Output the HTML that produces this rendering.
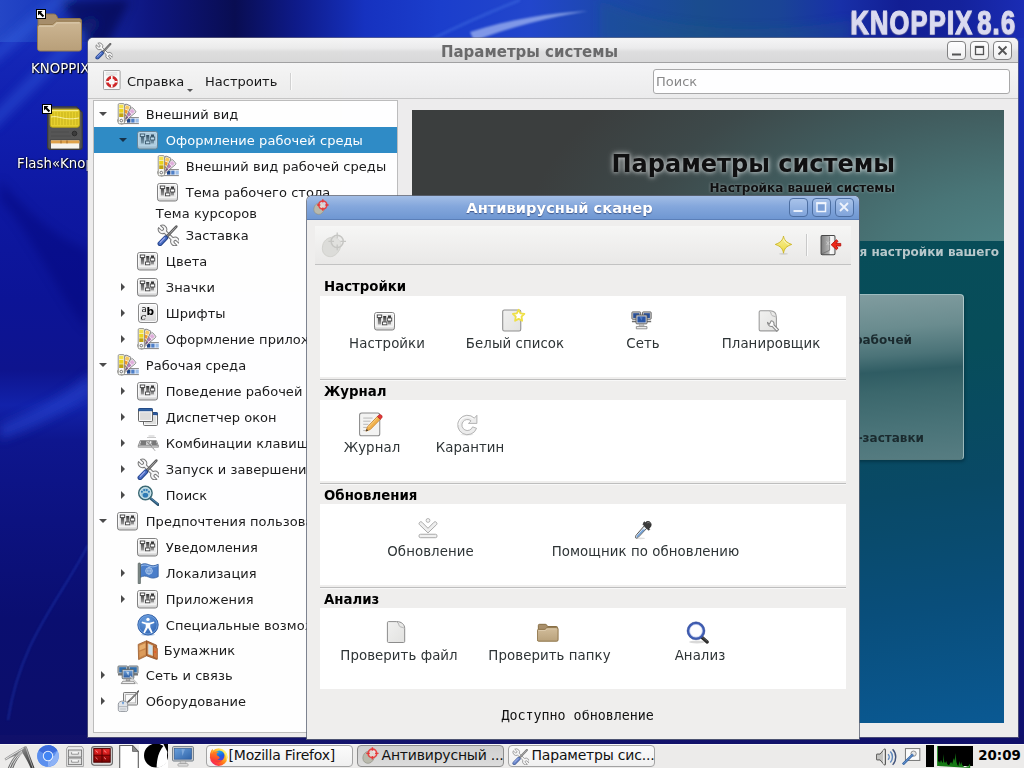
<!DOCTYPE html>
<html lang="ru"><head><meta charset="utf-8"><title>KNOPPIX 8.6</title>
<style>
*{box-sizing:border-box;margin:0;padding:0}
html,body{width:1024px;height:768px;overflow:hidden}
body{position:relative;font-family:"DejaVu Sans","Liberation Sans",sans-serif;font-size:13px;color:#1a1a1a;background:#0b1078}
.a{position:absolute}
svg{position:absolute;overflow:visible}
#desk{position:absolute;left:0;top:0;width:1024px;height:768px;overflow:hidden;
 background:linear-gradient(180deg,#1a32c2 0,#1426b6 60px,#101eae 125px,#0e18a2 200px,#0c1496 300px,#0e148e 370px,#1222aa 405px,#0e168e 440px,#0c1280 520px,#0a0e70 620px,#0c0e68 768px)}
#dtop{position:absolute;left:0;top:0;width:1024px;height:42px;
 background:linear-gradient(90deg,#2446c6 0,#1c3cc0 40px,#1426a2 88px,#0e1680 150px,#090d52 235px,#0e1a88 295px,#1632c0 365px,#1b3ecc 440px,#2246cc 530px,#1c48aa 610px,#1a4c8e 700px,#1a4496 780px,#1830a8 840px,#121e94 900px,#14229c 960px,#1a2cb4 1024px)}
#dright{position:absolute;left:1016px;top:38px;width:8px;height:710px;background:linear-gradient(180deg,#1a30b8 0,#1020a0 200px,#0c1488 450px,#10106c 710px)}
#dbot{position:absolute;left:0;top:735px;width:1024px;height:12px;background:linear-gradient(90deg,#10106a,#14146c 50%,#10106a)}
.dlabel{will-change:transform;opacity:.9999;position:absolute;color:#fff;font-size:13.33px;line-height:16px;white-space:nowrap;text-shadow:1px 1px 1px #000,0 0 2px #000}
/* settings window */
#sw{will-change:transform;opacity:.9999;position:absolute;left:88px;top:38px;width:930px;height:699px;background:#eeeded;border-radius:5px 5px 0 0;overflow:hidden;box-shadow:0 0 0 1px rgba(120,120,130,.55)}
#sw .tb{position:absolute;left:0;top:0;width:100%;height:25px;background:linear-gradient(#f6f6f6,#ececec 42%,#dedede 58%,#d9d9d9);border-bottom:1px solid #a2a2a2}
#sw .ttl{position:absolute;left:24px;width:835px;top:5px;line-height:19px;text-align:center;font-weight:bold;font-size:15px;color:#6b6b6b}
.wbtn{position:absolute;width:19px;height:19px;border:1px solid #828282;border-radius:4px;background:linear-gradient(#ffffff,#f0f0f0)}
#tree{position:absolute;left:5px;top:62px;width:305px;height:633px;background:#fff;border:1px solid #bdbdbd;overflow:hidden}
.row{position:absolute;left:0;width:303px;white-space:nowrap;font-size:13px;letter-spacing:.05px;color:#1c1c1c}
.row span{position:absolute;top:1px}
.row.sel{background:#308cc6;color:#fff}
.ar-d{position:absolute;width:0;height:0;border-left:4px solid transparent;border-right:4px solid transparent;border-top:4px solid #4c4c4c}
.ar-r{position:absolute;width:0;height:0;border-top:4px solid transparent;border-bottom:4px solid transparent;border-left:4px solid #4c4c4c}
/* AV window */
#av{position:absolute;left:307px;top:196px;width:552px;height:543px;background:#efeeed;border-radius:5px 5px 0 0;overflow:hidden;box-shadow:0 0 0 1px rgba(92,100,116,.8)}
#av .tb{position:absolute;left:0;top:0;width:100%;height:24px;background:linear-gradient(#a3bee6,#84a7dc 45%,#6f97d2);border-bottom:1px solid #5b7fb8}
#av .ttl{position:absolute;left:23px;width:459px;top:2px;line-height:19px;text-align:center;font-weight:bold;font-size:14.67px;color:#fff;text-shadow:0 1px 1px rgba(40,60,110,.7)}
.abtn{position:absolute;width:19px;height:19px;border:1px solid #4d6fa2;border-radius:4px;background:linear-gradient(#a9c3ea,#7fa3da)}
.pan{position:absolute;left:13px;width:526px;height:81px;background:#fff}
.sec{position:absolute;left:17px;font-weight:bold;font-size:13.33px;color:#000;line-height:16px}
.sep{position:absolute;left:13px;width:526px;height:1px;background:#bebebe;box-shadow:0 1px 0 #f8f8f8}
.it{position:absolute;letter-spacing:.07px;font-size:13.33px;color:#2e3436;text-align:center;white-space:nowrap;line-height:16px}
#task{position:absolute;left:0;top:744px;width:1024px;height:24px;background:#ecebea;border-top:1px solid #f8f8f8}
.tbtn{position:absolute;top:0;height:22px;width:147px;border:1px solid #a3a3a3;border-radius:4px;background:linear-gradient(#fbfbfb,#f0f0f0);font-size:14px;line-height:19px;white-space:nowrap;letter-spacing:-.2px;color:#111}
.tbtn.on{background:linear-gradient(#cfcfcf,#dcdcdc);border-color:#8d8d8d}
.tbtn span{position:absolute;top:0}
</style></head><body>
<div id="desk"><div id="dtop"></div><div id="dright"></div><div id="dbot"></div>
<svg style="left:0;top:0" width="1024" height="768"><defs><filter id="wb" x="-20%" y="-20%" width="140%" height="140%"><feGaussianBlur stdDeviation="5"/></filter><filter id="wb2"><feGaussianBlur stdDeviation="1.2"/></filter></defs><g filter="url(#wb)"><path d="M-10 60L70 -10M-10 125L95 20" stroke="#3c6ae8" stroke-width="12" opacity=".38" fill="none"/><path d="M60 0L130 0L100 60z" fill="#05083c" opacity=".55"/><path d="M0 425C40 408 70 392 92 372L92 396C60 414 30 430 0 440z" fill="#2a4ad8" opacity=".5"/><path d="M600 0C660 30 760 36 850 20L850 40L600 40z" fill="#1a5a80" opacity=".3"/><path d="M0 200C30 230 60 300 88 330L88 250C60 240 30 215 0 180z" fill="#0a0e70" opacity=".35"/></g><g filter="url(#wb2)"><path d="M470 32C510 19 550 13 588 11C550 17 510 27 474 41z" fill="#c0d0fa" opacity=".6"/><path d="M88 545C60 600 20 640 8 720" stroke="#2a48c8" stroke-width="1.400" opacity=".55" fill="none"/><path d="M430 40C470 20 500 8 520 0" stroke="#4a78e8" stroke-width="3" opacity=".35" fill="none"/></g></svg><svg style="left:37px;top:13px" width="46" height="40" viewBox="0 0 46 40"><use href="#i-dfold"/></svg><svg style="left:36px;top:9px" width="10" height="10" viewBox="0 0 10 10"><use href="#i-lnk"/></svg><svg style="left:47px;top:106px" width="36" height="44" viewBox="0 0 36 44"><use href="#i-flash"/></svg><svg style="left:42px;top:104px" width="10" height="10" viewBox="0 0 10 10"><use href="#i-lnk"/></svg><div class="dlabel" style="left:31px;top:60.5px">KNOPPIX</div>
<div class="dlabel" style="left:17px;top:156px">Flash«Knoppix»</div>
<div class="a" id="klogo" style="right:8px;top:6px;font:bold 33.5px/34px 'Liberation Sans',sans-serif;color:#dadaf0;-webkit-text-stroke:1.1px #dadaf0;letter-spacing:1.6px;word-spacing:-6px;transform:scaleX(.76);transform-origin:100% 50%;white-space:nowrap;text-shadow:1px 1px 1px #7c7ca8,-1px 1px 1px #7c7ca8">KNOPPIX 8.6</div>
</div>
<div id="sw"><div class="tb"><div class="ttl">Параметры системы</div><svg style="left:6.5px;top:3.5px" width="17.5" height="17.5" viewBox="0 0 22 22"><use href="#i-tools"/></svg><div class="wbtn" style="left:859px;top:3px"><svg style="left:-1px;top:-1px" width="19" height="19"><path d="M5 13.500h9" stroke="#555" stroke-width="2" fill="none"/></svg></div><div class="wbtn" style="left:882px;top:3px"><svg style="left:-1px;top:-1px" width="19" height="19"><rect x="5.500" y="5.500" width="8" height="8" fill="none" stroke="#555" stroke-width="1.300"/><path d="M5 6h9" stroke="#555" stroke-width="2"/></svg></div><div class="wbtn" style="left:905px;top:3px"><svg style="left:-1px;top:-1px" width="19" height="19"><path d="M5.500 5.500l8 8M13.500 5.500l-8 8" stroke="#555" stroke-width="1.800" fill="none"/></svg></div></div>
<div class="a" style="left:0;top:25px;width:930px;height:35px;background:linear-gradient(#f6f6f6,#ececec)"></div><div class="a" style="left:0;top:60px;width:930px;height:1px;background:#c6c6c6"></div><svg style="left:15px;top:32px" width="19" height="21" viewBox="0 0 20 22"><use href="#i-help"/></svg><div class="a" style="left:39px;top:35px;font-size:13px;line-height:18px">Справка</div><div class="a" style="left:99px;top:51px;width:0;height:0;border-left:3px solid transparent;border-right:3px solid transparent;border-top:3px solid #555"></div><div class="a" style="left:117px;top:35px;font-size:13px;line-height:18px">Настроить</div><div class="a" style="left:202px;top:35px;width:1px;height:17px;background:#d2d2d2;box-shadow:1px 0 0 #fbfbfb"></div><div class="a" style="left:565px;top:31px;width:357px;height:25px;background:#fff;border:1px solid #a9a9a9;border-radius:3px;font-size:13px;line-height:23px;color:#8a8a8a;padding-left:2px">Поиск</div>
<div id="tree">
<div class="row" style="top:0px;height:26px;line-height:26px"><i class="ar-d" style="left:5px;top:11px"></i><svg style="left:23px;top:2px" width="22" height="22" viewBox="0 0 22 22"><use href="#i-pal"/></svg><span style="left:51.8px">Внешний вид</span></div>
<div class="row sel" style="top:26px;height:26px;line-height:26px"><i class="ar-d" style="left:25px;top:11px;border-top-color:#17334a"></i><svg style="left:43px;top:2px;opacity:.68" width="22" height="22" viewBox="0 0 22 22"><use href="#i-mix"/></svg><span style="left:71.8px">Оформление рабочей среды</span></div>
<div class="row" style="top:52px;height:26px;line-height:26px"><svg style="left:63px;top:2px" width="22" height="22" viewBox="0 0 22 22"><use href="#i-pal"/></svg><span style="left:91.8px">Внешний вид рабочей среды</span></div>
<div class="row" style="top:78px;height:26px;line-height:26px"><svg style="left:63px;top:2px" width="22" height="22" viewBox="0 0 22 22"><use href="#i-mix"/></svg><span style="left:91.8px">Тема рабочего стола</span></div>
<div class="row" style="top:99px;height:26px;line-height:26px"><span style="left:61.80000000000001px">Тема курсоров</span></div>
<div class="row" style="top:121px;height:26px;line-height:26px"><svg style="left:63px;top:2px" width="22" height="22" viewBox="0 0 22 22"><use href="#i-tools"/></svg><span style="left:91.8px">Заставка</span></div>
<div class="row" style="top:147px;height:26px;line-height:26px"><svg style="left:43px;top:2px" width="22" height="22" viewBox="0 0 22 22"><use href="#i-mix"/></svg><span style="left:71.8px">Цвета</span></div>
<div class="row" style="top:173px;height:26px;line-height:26px"><i class="ar-r" style="left:27px;top:9px"></i><svg style="left:43px;top:2px" width="22" height="22" viewBox="0 0 22 22"><use href="#i-mix"/></svg><span style="left:71.8px">Значки</span></div>
<div class="row" style="top:199px;height:26px;line-height:26px"><i class="ar-r" style="left:27px;top:9px"></i><svg style="left:43px;top:2px" width="22" height="22" viewBox="0 0 22 22"><use href="#i-font"/></svg><span style="left:71.8px">Шрифты</span></div>
<div class="row" style="top:225px;height:26px;line-height:26px"><i class="ar-r" style="left:27px;top:9px"></i><svg style="left:43px;top:2px" width="22" height="22" viewBox="0 0 22 22"><use href="#i-pal"/></svg><span style="left:71.8px">Оформление приложений</span></div>
<div class="row" style="top:251px;height:26px;line-height:26px"><i class="ar-d" style="left:5px;top:11px"></i><svg style="left:23px;top:2px" width="22" height="22" viewBox="0 0 22 22"><use href="#i-pal"/></svg><span style="left:51.8px">Рабочая среда</span></div>
<div class="row" style="top:277px;height:26px;line-height:26px"><i class="ar-r" style="left:27px;top:9px"></i><svg style="left:43px;top:2px" width="22" height="22" viewBox="0 0 22 22"><use href="#i-mix"/></svg><span style="left:71.8px">Поведение рабочей среды</span></div>
<div class="row" style="top:303px;height:26px;line-height:26px"><i class="ar-r" style="left:27px;top:9px"></i><svg style="left:43px;top:2px" width="22" height="22" viewBox="0 0 22 22"><use href="#i-win"/></svg><span style="left:71.8px">Диспетчер окон</span></div>
<div class="row" style="top:329px;height:26px;line-height:26px"><i class="ar-r" style="left:27px;top:9px"></i><svg style="left:43px;top:2px" width="22" height="22" viewBox="0 0 22 22"><use href="#i-keys"/></svg><span style="left:71.8px">Комбинации клавиш</span></div>
<div class="row" style="top:355px;height:26px;line-height:26px"><i class="ar-r" style="left:27px;top:9px"></i><svg style="left:43px;top:2px" width="22" height="22" viewBox="0 0 22 22"><use href="#i-tools"/></svg><span style="left:71.8px">Запуск и завершение</span></div>
<div class="row" style="top:381px;height:26px;line-height:26px"><i class="ar-r" style="left:27px;top:9px"></i><svg style="left:43px;top:2px" width="22" height="22" viewBox="0 0 22 22"><use href="#i-find"/></svg><span style="left:71.8px">Поиск</span></div>
<div class="row" style="top:407px;height:26px;line-height:26px"><i class="ar-d" style="left:5px;top:11px"></i><svg style="left:23px;top:2px" width="22" height="22" viewBox="0 0 22 22"><use href="#i-mix"/></svg><span style="left:51.8px">Предпочтения пользователя</span></div>
<div class="row" style="top:433px;height:26px;line-height:26px"><svg style="left:43px;top:2px" width="22" height="22" viewBox="0 0 22 22"><use href="#i-mix"/></svg><span style="left:71.8px">Уведомления</span></div>
<div class="row" style="top:459px;height:26px;line-height:26px"><i class="ar-r" style="left:27px;top:9px"></i><svg style="left:43px;top:2px" width="22" height="22" viewBox="0 0 22 22"><use href="#i-flag"/></svg><span style="left:71.8px">Локализация</span></div>
<div class="row" style="top:485px;height:26px;line-height:26px"><i class="ar-r" style="left:27px;top:9px"></i><svg style="left:43px;top:2px" width="22" height="22" viewBox="0 0 22 22"><use href="#i-mix"/></svg><span style="left:71.8px">Приложения</span></div>
<div class="row" style="top:511px;height:26px;line-height:26px"><svg style="left:43px;top:2px" width="22" height="22" viewBox="0 0 22 22"><use href="#i-acc"/></svg><span style="left:71.8px">Специальные возможности</span></div>
<div class="row" style="top:536px;height:26px;line-height:26px"><svg style="left:43px;top:2px" width="22" height="22" viewBox="0 0 22 22"><use href="#i-wallet"/></svg><span style="left:69.8px">Бумажник</span></div>
<div class="row" style="top:561px;height:26px;line-height:26px"><i class="ar-r" style="left:7px;top:9px"></i><svg style="left:23px;top:2px" width="22" height="22" viewBox="0 0 22 22"><use href="#i-net"/></svg><span style="left:51.8px">Сеть и связь</span></div>
<div class="row" style="top:587px;height:26px;line-height:26px"><i class="ar-r" style="left:7px;top:9px"></i><svg style="left:23px;top:2px" width="22" height="22" viewBox="0 0 22 22"><use href="#i-hw"/></svg><span style="left:51.8px">Оборудование</span></div>
</div>
<div class="a" id="cp" style="left:324px;top:72px;width:592px;height:613px;overflow:hidden;background:linear-gradient(172deg,#0a4d56 0,#084e5a 45%,#0a4a66 65%,#0a4f7c 82%,#0b5a94 100%)"><div class="a" style="left:0;top:0;width:592px;height:131px;background:radial-gradient(ellipse 520px 300px at 105% 125%,#528a8c 0,#4a7677 30%,#425e5f 55%,#3e4a4a 78%,#3c3f3e 100%)"></div><div class="a" style="right:109px;top:39px;font-weight:bold;font-size:24px;line-height:30px;color:#111;white-space:nowrap;text-shadow:0 0 4px rgba(255,255,255,.7),0 0 7px rgba(255,255,255,.45)">Параметры системы</div><div class="a" style="right:109px;top:70px;font-weight:bold;font-size:12px;line-height:16px;color:#111;white-space:nowrap;text-shadow:0 0 3px rgba(255,255,255,.45)">Настройка вашей системы</div><div class="a" style="right:5px;top:134px;font-weight:bold;font-size:12px;line-height:16px;color:#b9c9cb;white-space:nowrap">Добро пожаловать в программу «Параметры системы», центральное место для настройки вашего</div><div class="a" style="left:300px;top:184px;width:252px;height:166px;border-radius:4px;border:1px solid rgba(200,225,225,.65);border-left-color:rgba(120,160,160,.5);border-bottom-color:rgba(60,100,105,.6);background:linear-gradient(176deg,#88a2a4 0,#6b8d8f 25%,#4c7478 40%,#305d63 49%,#3c686c 60%,#4a7478 80%,#587e82 100%);box-shadow:1px 2px 3px rgba(0,30,40,.4)"><div class="a" style="right:51px;top:37px;font-weight:bold;font-size:12px;color:#1b2b2e;white-space:nowrap;line-height:16px">Оформление рабочей</div><div class="a" style="right:39px;top:135px;font-weight:bold;font-size:12px;color:#1b2b2e;white-space:nowrap;line-height:16px">Хранитель экрана-заставки</div></div></div>
</div>
<div id="av"><div class="tb"><div class="ttl">Антивирусный сканер</div><svg style="left:6px;top:3px" width="16" height="16" viewBox="0 0 16 16"><use href="#i-av"/></svg><div class="abtn" style="left:482px;top:2px"><svg style="left:-1px;top:-1px" width="19" height="19"><path d="M4.500 13h9" stroke="#e6eefb" stroke-width="2.200" fill="none"/></svg></div><div class="abtn" style="left:505px;top:2px"><svg style="left:-1px;top:-1px" width="19" height="19"><rect x="5" y="5" width="8.500" height="8.500" fill="#7b9fd6" stroke="#f0f5fd" stroke-width="1.500"/><path d="M4.300 5.300h10" stroke="#f0f5fd" stroke-width="2"/></svg></div><div class="abtn" style="left:528px;top:2px"><svg style="left:-1px;top:-1px" width="19" height="19"><path d="M5 5l8 8M13 5l-8 8" stroke="#eef3fc" stroke-width="1.800" fill="none"/></svg></div></div>
<div class="a" style="left:8px;top:30px;width:536px;height:38px;background:linear-gradient(#f6f6f5,#e9e8e7)"></div><div class="a" style="left:8px;top:68px;width:536px;height:1px;background:#c2c2c2"></div><svg style="left:14px;top:35px" width="27" height="27" viewBox="0 0 24 24"><use href="#i-avg"/></svg><svg style="left:466px;top:39px" width="21" height="21" viewBox="0 0 24 24"><use href="#i-star"/></svg><div class="a" style="left:499px;top:38px;width:1px;height:22px;background:#c9c9c9;box-shadow:1px 0 0 #fafafa"></div><svg style="left:512.5px;top:38.5px" width="23" height="22" viewBox="0 0 24 23"><use href="#i-exit"/></svg><div class="sec" style="top:82.5px">Настройки</div><div class="pan" style="top:100px"></div><div class="sep" style="top:183px"></div><div class="sec" style="top:188px">Журнал</div><div class="pan" style="top:204px"></div><div class="sep" style="top:287px"></div><div class="sec" style="top:292px">Обновления</div><div class="pan" style="top:308px"></div><div class="sep" style="top:391px"></div><div class="sec" style="top:396px">Анализ</div><div class="pan" style="top:412px"></div><svg style="left:67px;top:114px" width="22" height="22" viewBox="0 0 22 22"><use href="#i-mix"/></svg><div class="it" style="left:-40px;width:240px;top:140px">Настройки</div>
<svg style="left:194.39999999999998px;top:112.39999999999998px" width="25.5" height="25.5" viewBox="0 0 24 24"><use href="#i-wl"/></svg><div class="it" style="left:88px;width:240px;top:140px">Белый список</div>
<svg style="left:322.5px;top:115.39999999999998px" width="24" height="22" viewBox="0 0 24 22"><use href="#i-netm"/></svg><div class="it" style="left:216px;width:240px;top:140px">Сеть</div>
<svg style="left:450px;top:111.69999999999999px" width="26.2" height="27.4" viewBox="0 0 23 24"><use href="#i-sched"/></svg><div class="it" style="left:344px;width:240px;top:140px">Планировщик</div>
<svg style="left:51.39999999999998px;top:215.39999999999998px" width="25" height="26" viewBox="0 0 24 25"><use href="#i-log"/></svg><div class="it" style="left:-55px;width:240px;top:244px">Журнал</div>
<svg style="left:149px;top:218px" width="22" height="22" viewBox="0 0 24 24"><use href="#i-quar"/></svg><div class="it" style="left:43px;width:240px;top:244px">Карантин</div>
<svg style="left:108.60000000000002px;top:320.6px" width="24" height="23" viewBox="0 0 24 23"><use href="#i-upd"/></svg><div class="it" style="left:3.5px;width:240px;top:348px">Обновление</div>
<svg style="left:324.6px;top:322.70000000000005px" width="22.3" height="22.3" viewBox="0 0 24 24"><use href="#i-pip"/></svg><div class="it" style="left:218.5px;width:240px;top:348px">Помощник по обновлению</div>
<svg style="left:78px;top:424.4px" width="22" height="24" viewBox="0 0 22 24"><use href="#i-file"/></svg><div class="it" style="left:-28px;width:240px;top:452px">Проверить файл</div>
<svg style="left:229.70000000000005px;top:424.6px" width="22.8" height="22.8" viewBox="0 0 24 24"><use href="#i-fold"/></svg><div class="it" style="left:122.5px;width:240px;top:452px">Проверить папку</div>
<svg style="left:379.1px;top:425px" width="24" height="24" viewBox="0 0 24 24"><use href="#i-ana"/></svg><div class="it" style="left:273px;width:240px;top:452px">Анализ</div>
<div class="a" style="left:194.39999999999998px;top:512px;font-family:'DejaVu Sans Mono','Liberation Mono',monospace;font-size:13.33px;line-height:16px;color:#111;white-space:pre">Доступно обновление</div></div>
<div id="task"><svg style="left:1px;top:0px" width="34" height="24" viewBox="0 0 34 24"><use href="#i-lxde"/></svg><svg style="left:37px;top:0px" width="22" height="22" viewBox="0 0 22 22"><use href="#i-chr"/></svg><svg style="left:66px;top:1px" width="18" height="21" viewBox="0 0 18 21"><use href="#i-cab"/></svg><svg style="left:91px;top:1px" width="22" height="20" viewBox="0 0 22 20"><use href="#i-grid"/></svg><svg style="left:119px;top:0px" width="20" height="24" viewBox="0 0 20 24"><use href="#i-wdoc"/></svg><svg style="left:139px;top:-1px" width="29" height="24" viewBox="0 0 29 24"><use href="#i-moon"/></svg><svg style="left:172px;top:1px" width="22" height="21" viewBox="0 0 22 21"><use href="#i-mon"/></svg><div class="tbtn" style="left:206px"><svg style="left:1.5px;top:0.5px" width="19" height="19" viewBox="0 0 18 18"><use href="#i-ff"/></svg><span style="left:21.5px">[Mozilla Firefox]</span></div><div class="tbtn on" style="left:357px"><svg style="left:4px;top:1px" width="17" height="17" viewBox="0 0 16 16"><use href="#i-av"/></svg><span style="left:23.5px">Антивирусный ...</span></div><div class="tbtn" style="left:508px"><svg style="left:3px;top:2px;opacity:.8" width="17" height="17" viewBox="0 0 22 22"><use href="#i-tools"/></svg><span style="left:22.5px">Параметры сис...</span></div><svg style="left:876px;top:3px" width="22" height="18" viewBox="0 0 23 19"><use href="#i-vol"/></svg><svg style="left:902px;top:3px" width="19" height="17" viewBox="0 0 20 18"><use href="#i-plug"/></svg><div class="a" style="left:926px;top:0;width:8px;height:22px;background:#000"></div><div class="a" style="left:937px;top:1px;width:36px;height:20px;background:#000;border-left:1px solid #2f8f2f"><svg style="left:0;top:0" width="35" height="20"><path d="M0 20V16l1-1 1 2 1-3 1 2 1 1 .6-9 .6 8 1 1 1-2 1 3 1 1h1l1-2 1-1 1 2 1-4 .8-2 .8 3 .8-8 .8 9 1 3 1 1 1-5 .8 4 1-3 1 3 1 1 1 1h2l1-1 1 1 1-3 1 1v3z" fill="#147814"/></svg></div><div class="a" style="left:977px;top:2px;width:45px;text-align:center;font-weight:bold;font-size:13.33px;line-height:18px;color:#000">20:09</div></div>
<svg width="0" height="0" style="position:absolute;left:-10px;top:-10px"><defs>
<linearGradient id="g-lt" x1="0" y1="0" x2="0" y2="1"><stop offset="0" stop-color="#fbfbfb"/><stop offset="1" stop-color="#d4d4d4"/></linearGradient>
<linearGradient id="g-tr" x1="0" y1="0" x2="0" y2="1"><stop offset="0" stop-color="#2e2e2e"/><stop offset="1" stop-color="#a2a2a2"/></linearGradient>
<linearGradient id="g-bl" x1="0" y1="0" x2="1" y2="1"><stop offset="0" stop-color="#8f9be0"/><stop offset=".5" stop-color="#3f63b4"/><stop offset="1" stop-color="#27468c"/></linearGradient>
<linearGradient id="g-scr" x1="0" y1="0" x2="0" y2="1"><stop offset="0" stop-color="#6d9fd8"/><stop offset="1" stop-color="#2c5ea3"/></linearGradient>
<linearGradient id="g-fold" x1="0" y1="0" x2="0" y2="1"><stop offset="0" stop-color="#cdb693"/><stop offset="1" stop-color="#b89f79"/></linearGradient>
<radialGradient id="g-acc" cx=".4" cy=".3" r=".8"><stop offset="0" stop-color="#6a9ede"/><stop offset="1" stop-color="#2a5fb0"/></radialGradient>

<!-- mixer / preferences -->
<symbol id="i-mix" viewBox="0 0 22 22">
<rect x=".5" y="2.5" width="20" height="17.5" rx="2.2" fill="url(#g-lt)" stroke="#818181"/>
<rect x="1.6" y="3.6" width="17.8" height="13.2" rx="1" fill="#ececec" stroke="#fff" stroke-width=".8"/>
<rect x="3.9" y="5.5" width="3.2" height="9" fill="url(#g-tr)"/>
<rect x="9.2" y="6" width="3" height="6.5" fill="url(#g-tr)"/>
<rect x="14" y="5.5" width="3" height="9" fill="url(#g-tr)"/>
<rect x="3.3" y="5" width="4.4" height="2.6" fill="#fff" stroke="#444" stroke-width=".9"/>
<rect x="8.5" y="12" width="4.4" height="2.8" fill="#fff" stroke="#444" stroke-width=".9"/>
<rect x="13.3" y="8" width="4.4" height="3" fill="#fff" stroke="#444" stroke-width=".9"/>
</symbol>

<!-- colour palette fan -->
<symbol id="i-pal" viewBox="0 0 22 22">
<g transform="rotate(90 4.2 17.6)"><rect x="1.2" y="-1" width="6" height="20.4" rx="1" fill="#fbfbfb" stroke="#777" stroke-width=".9"/><rect x="2.2" y="0" width="4" height="3.4" fill="#9fc0ea"/><rect x="2.2" y="4.2" width="4" height="3.4" fill="#4f80c8"/><rect x="2.2" y="8.4" width="4" height="3.4" fill="#1e478c"/></g>
<g transform="rotate(50 4.2 17.6)"><rect x="1.2" y=".5" width="6" height="19.4" rx="1" fill="#fbfbfb" stroke="#858585" stroke-width=".9"/><rect x="2.2" y="1.5" width="4" height="3.6" fill="#e0b0dc"/><rect x="2.2" y="5.8" width="4" height="3.6" fill="#b87cb8"/><rect x="2.2" y="10.1" width="4" height="3.6" fill="#6f3a72"/></g>
<g transform="rotate(25 4.2 17.6)"><rect x="1.2" y=".5" width="6" height="19.4" rx="1" fill="#fbfbfb" stroke="#858585" stroke-width=".9"/><rect x="2.2" y="1.5" width="4" height="3.6" fill="#f7c860"/><rect x="2.2" y="5.8" width="4" height="3.6" fill="#ef9a28"/><rect x="2.2" y="10.1" width="4" height="3.6" fill="#a65d22"/></g>
<rect x="1.2" y=".6" width="6.2" height="20.2" rx="1.2" fill="#f8f8f4" stroke="#8b8b85" stroke-width=".9"/>
<rect x="2.2" y="1.7" width="4.2" height="3.7" fill="#f4e24a"/><rect x="2.2" y="6" width="4.2" height="3.7" fill="#ecd51c"/><rect x="2.2" y="10.3" width="4.2" height="3.7" fill="#c2a40e"/>
<circle cx="4.3" cy="17.6" r="1.3" fill="#fff" stroke="#555" stroke-width=".8"/>
</symbol>

<!-- wrench + screwdriver -->
<symbol id="i-tools" viewBox="0 0 22 22">
<g transform="translate(5.500 5.400) rotate(44)"><path d="M-4.070-1.400H-.6A1.400 1.400 0 0 1-.6 1.400H-4.070A4.300 4.300 0 0 0 4.030 1.500H13.270A4.300 4.300 0 0 0 21.370 1.400H17.900A1.400 1.400 0 0 1 17.900-1.400H21.370A4.300 4.300 0 0 0 13.270-1.500H4.030A4.300 4.300 0 0 0-4.070-1.400z" fill="#f7f7f7" stroke="#7a7a7a" stroke-width="1" stroke-linejoin="round"/></g>
<path d="M9.500 13 L19.300 2.600" stroke="#5e5e5e" stroke-width="2.700" stroke-linecap="round"/>
<path d="M9.900 12.600 L19.100 2.900" stroke="#ececec" stroke-width=".9" stroke-dasharray=".9 .7"/>
<path d="M3 19.700 L8.700 13.900" stroke="#27448c" stroke-width="4.900" stroke-linecap="round"/>
<path d="M3.100 19.300 L8.400 13.900" stroke="#4a70c4" stroke-width="3.200" stroke-linecap="round"/>
<path d="M3.300 18.300 L7.600 13.900" stroke="#a4acee" stroke-width="1.100" stroke-linecap="round"/>
</symbol>

<!-- fonts -->
<symbol id="i-font" viewBox="0 0 22 22">
<rect x="1.5" y="1.5" width="19" height="19" rx="2.5" fill="url(#g-lt)" stroke="#8a8a8a"/>
<rect x="2.5" y="2.5" width="17" height="17" rx="1.8" fill="none" stroke="#fff" stroke-width=".9"/>
<text x="4.4" y="9.6" font-family="DejaVu Sans,sans-serif" font-size="8.5" fill="#111">a</text>
<text x="9.6" y="12.6" font-family="DejaVu Sans,sans-serif" font-weight="bold" font-size="10.5" fill="#000">b</text>
<text x="3.6" y="17.6" font-family="DejaVu Serif,serif" font-style="italic" font-size="10" fill="#111">c</text>
</symbol>

<!-- window manager -->
<symbol id="i-win" viewBox="0 0 22 22">
<rect x="6.5" y="6.5" width="14" height="13" rx="1" fill="#e0e0de" stroke="#6c6c6c"/>
<rect x="6.5" y="6.5" width="14" height="2.6" rx="1" fill="#2f5b9f" stroke="#244b86"/>
<rect x="7.6" y="9.7" width="11.8" height="8.7" fill="none" stroke="#fff" stroke-width=".8"/>
<rect x="1.5" y="2.5" width="14" height="13" rx="1" fill="#dedddb" stroke="#666"/>
<rect x="1.5" y="2.5" width="14" height="2.6" rx="1" fill="#3465a4" stroke="#244b86"/>
<rect x="2.6" y="5.8" width="11.8" height="8.6" fill="none" stroke="#fff" stroke-width=".9"/>
</symbol>

<!-- keyboard shortcuts -->
<symbol id="i-keys" viewBox="0 0 22 22">
<path d="M10 5.5h9M11.5 4h6" stroke="#c9c9c9" stroke-width="1"/>
<path d="M3.2 8.6h16.2l2 5.4H1.2z" fill="#c9c9c9" stroke="#8a8a8a" stroke-width=".9" stroke-linejoin="round"/>
<path d="M1.2 14h20.2v1.3H1.2z" fill="#e9e9e9" stroke="#8a8a8a" stroke-width=".7"/>
<path d="M4 10h5M3.4 12h5.6M15 10h4M15 12h4.8" stroke="#5f5f5f" stroke-width="1.3"/>
<path d="M9.5 9.2 L17 17.2 M12.8 8.3 l2.4 1.4 -1.2 2.6 -2.4-.3z" stroke="#8c8c8c" stroke-width="1" fill="#f2f2f2" stroke-linejoin="round"/>
<path d="M14.6 14.6 L18.3 19" stroke="#b5b5b5" stroke-width="1"/>
</symbol>

<!-- search (magnifier with paw) -->
<symbol id="i-find" viewBox="0 0 22 22">
<path d="M13 14 L21.2 20.6" stroke="#2d5570" stroke-width="2.8" stroke-linecap="round"/>
<path d="M13.5 14 L20.6 19.7" stroke="#4d88b5" stroke-width="1" stroke-linecap="round"/>
<circle cx="8.4" cy="9" r="6.7" fill="#a9cfdc" stroke="#3d6a74" stroke-width="1.5"/>
<circle cx="8.4" cy="9" r="5.4" fill="none" stroke="#d6eaf0" stroke-width=".8"/>
<path d="M5.6 10.4c0-2 5.6-2 5.6 0 0 2.3-1.2 3.2-2.8 3.2s-2.800-.9-2.800-3.200z" fill="#2f7bb4"/>
<circle cx="4.900" cy="7.800" r="1.05" fill="#2f7bb4"/><circle cx="7.2" cy="6.100" r="1.1" fill="#2f7bb4"/><circle cx="9.700" cy="6.100" r="1.1" fill="#2f7bb4"/><circle cx="11.900" cy="7.800" r="1.05" fill="#2f7bb4"/>
</symbol>

<!-- flag -->
<symbol id="i-flag" viewBox="0 0 22 22">
<path d="M3.4 2.900c3.200-1.600 5.200-1.600 8.400-.2s5.400 1.400 9.400-.4v12.400c-4 1.800-6.200 1.800-9.400.4s-5.200-1.400-8.400.2z" fill="#4b7fcb" stroke="#34609f" stroke-width=".8"/>
<path d="M4 4c3-1.400 4.800-1.300 7.800 0s5.200 1.200 8.800-.4" stroke="#9ec0ee" stroke-width=".9" fill="none"/>
<circle cx="12" cy="8.900" r="3.300" fill="none" stroke="#b9d2f2" stroke-width=".9"/><path d="M12 5.600v6.600M8.700 8.900h6.600" stroke="#b9d2f2" stroke-width=".6"/>
<ellipse cx="12" cy="8.900" rx="1.500" ry="3.300" fill="none" stroke="#b9d2f2" stroke-width=".6"/>
<rect x="1.200" y="1" width="2.200" height="21" rx=".8" fill="#7e8a86" stroke="#555f5b" stroke-width=".7"/>
</symbol>

<!-- accessibility -->
<symbol id="i-acc" viewBox="0 0 22 22">
<ellipse cx="11" cy="20.600" rx="7" ry="1.200" fill="#3a78c8" opacity=".35"/>
<circle cx="11" cy="10.800" r="10.200" fill="url(#g-acc)" stroke="#2a58a0" stroke-width=".9"/>
<circle cx="11" cy="10.800" r="9.200" fill="none" stroke="#7fb0ea" stroke-width=".7"/>
<circle cx="11" cy="5.400" r="1.700" fill="#fff"/>
<path d="M5 7.600l4.400 1.100h3.200L17 7.600l.4 1.500-4.200 1.500.1 2.600 2.400 5.300-1.500.7L11 13.700 7.800 19.200l-1.500-.7 2.400-5.300.1-2.600L4.600 9.100z" fill="#fff"/>
</symbol>

<!-- wallet -->
<symbol id="i-wallet" viewBox="0 0 22 22">
<path d="M1.200 5.400 L9.600 1.800 V16.800 L1.600 20.600z" fill="#c8854a" stroke="#9a5c2c" stroke-width=".8" stroke-linejoin="round"/>
<path d="M2.400 6.800 L8.400 4.200 V9 L2.400 11.400z" fill="#e8b070"/>
<path d="M2.500 12.800 L8.400 10.400 V15.600 L2.600 18.200z" fill="#dc9c5c"/>
<path d="M9.600 1.800 L19.600 6.200 V20.400 L9.600 16.800z" fill="#b8703a" stroke="#8f4f24" stroke-width=".8" stroke-linejoin="round"/>
<path d="M11.200 4.800 L15.800 6.800 V16.600 L11.200 15z" fill="#cfe2ee" stroke="#e8d8c0" stroke-width=".7"/>
<path d="M16.400 7 L20.400 9.400 V20.200 L16.400 18z" fill="#d07a40" stroke="#9a5428" stroke-width=".7" stroke-linejoin="round"/>
<circle cx="18.200" cy="13" r=".9" fill="#e85a2a"/>
</symbol>

<!-- network -->
<symbol id="i-net" viewBox="0 0 22 22">
<rect x="1" y="2" width="9.500" height="7.600" rx=".8" fill="#c9c9c9" stroke="#5e6a72" stroke-width=".9"/><rect x="2.200" y="3.200" width="7.100" height="5.200" fill="#2f6fb0"/>
<rect x="11.500" y="2" width="9.500" height="7.600" rx=".8" fill="#c9c9c9" stroke="#5e6a72" stroke-width=".9"/><rect x="12.700" y="3.200" width="7.100" height="5.200" fill="#2f6fb0"/>
<path d="M1 10.800h9.500M11.500 10.800H21" stroke="#777" stroke-width="1.400"/>
<rect x="5.200" y="5.400" width="11.600" height="9.400" rx=".9" fill="#d2d2d2" stroke="#56626b" stroke-width=".9"/><rect x="6.500" y="6.700" width="9" height="6.800" fill="url(#g-scr)"/>
<path d="M9 7.500l3 .4-.6 3.800z" fill="#d9e8f6" opacity=".8"/>
<path d="M9.600 14.800h2.800l.6 2.200H9z" fill="#bbb" stroke="#777" stroke-width=".5"/>
<path d="M5.800 17.200h10.600l1.800 2.400H4.200z" fill="#efefef" stroke="#777" stroke-width=".8" stroke-linejoin="round"/>
<path d="M13 12 L20.600 20" stroke="#c9c9c9" stroke-width="1.100"/>
</symbol>

<!-- hardware -->
<symbol id="i-hw" viewBox="0 0 22 22">
<rect x="6.500" y="2.500" width="14" height="12.500" rx=".8" fill="#efefef" stroke="#777" stroke-width="1"/>
<rect x="8.600" y="4.600" width="9.800" height="8.300" fill="#fafafa" stroke="#a8a8a8" stroke-width=".8"/>
<path d="M21.400.6 L11.800 10.600 L10.200 12.400 L12.400 11.400 L21.900 1.400z" fill="#6a6a6a" stroke="#3d3d3d" stroke-width=".8" stroke-linejoin="round"/>
<path d="M20.400 1.800 L12.600 10" stroke="#cfcfcf" stroke-width=".8"/>
<path d="M1.300 14.200c0-4.200 9.400-4.200 9.400 0v5.400c0 1.300-.8 2-2 2H3.300c-1.200 0-2-.7-2-2z" fill="#e3e6ea" stroke="#8a8f96" stroke-width=".9"/>
<path d="M1.600 16.600h8.800" stroke="#a6abb2" stroke-width=".8"/>
<path d="M4.800 12.200h2.400L6 14.800z" fill="#4a8ad4"/>
<rect x="3" y="18" width="6" height="2.200" rx=".6" fill="#cfd3d8"/>
</symbol>
<linearGradient id="g-doc" x1="0" y1="0" x2="1" y2="1"><stop offset="0" stop-color="#f1f1f0"/><stop offset="1" stop-color="#e2e2e0"/></linearGradient>
<linearGradient id="g-door" x1="0" y1="0" x2="1" y2="0"><stop offset="0" stop-color="#7d7d7d"/><stop offset=".6" stop-color="#b9b9b9"/><stop offset=".62" stop-color="#fff"/><stop offset="1" stop-color="#e8e8e8"/></linearGradient>
<linearGradient id="g-star" x1="0" y1="0" x2="0" y2="1"><stop offset="0" stop-color="#f8f0a0"/><stop offset="1" stop-color="#ecd93c"/></linearGradient>
<linearGradient id="g-fold2" x1="0" y1="0" x2="0" y2="1"><stop offset="0" stop-color="#d2bd9b"/><stop offset="1" stop-color="#b9a27c"/></linearGradient>

<!-- whitelist : doc + star -->
<symbol id="i-wl" viewBox="0 0 24 24">
<rect x="1.600" y="1.800" width="17" height="19.800" rx="1.600" fill="url(#g-doc)" stroke="#8f8f8f" stroke-width="1"/>
<path d="M16.600 1.600l1.700 3.400 3.700.5-2.700 2.700.6 3.800-3.300-1.800-3.300 1.800.6-3.800-2.700-2.700 3.700-.5z" fill="#fff" stroke="#efe046" stroke-width="1.700" stroke-linejoin="round"/>
</symbol>

<!-- network monitors (av) -->
<symbol id="i-netm" viewBox="0 0 24 24">
<rect x="1" y="1" width="9.500" height="8" rx=".8" fill="#cfcfcf" stroke="#5c5c5c" stroke-width="1"/><rect x="2.400" y="2.400" width="6.700" height="5.200" fill="#274f9a"/>
<rect x="12.500" y="1" width="9.500" height="8" rx=".8" fill="#cfcfcf" stroke="#5c5c5c" stroke-width="1"/><rect x="13.900" y="2.400" width="6.700" height="5.200" fill="#274f9a"/>
<path d="M1 11.400h7M15 11.400h7" stroke="#6e6e6e" stroke-width="1.600"/>
<rect x="5.500" y="4.400" width="12" height="9.600" rx=".9" fill="#dcdcdc" stroke="#555" stroke-width="1"/><rect x="7" y="5.900" width="9" height="6.600" fill="#2a56a6"/>
<path d="M9.400 6.500l3.200.3-1 3.800z" fill="#5b86cc" opacity=".8"/>
<path d="M9.500 14.200h4l.8 2h-5.600z" fill="#c4c4c4" stroke="#8a8a8a" stroke-width=".5"/>
<path d="M5.800 17h11.600v2.400H5.800z" fill="#f4f4f4" stroke="#7c7c7c" stroke-width=".9" stroke-linejoin="round"/>
</symbol>

<!-- scheduler: doc + wrench -->
<symbol id="i-sched" viewBox="0 0 24 24">
<path d="M3.200 2h8.600c4 0 6 2.400 6 6.200V20.400H3.200c-.8 0-1.200-.4-1.200-1.200V3.200c0-.8.400-1.200 1.200-1.200z" fill="url(#g-doc)" stroke="#9c9c9c" stroke-width="1"/>
<path d="M11.400 2.400c1.800.6 1.200 2.800 2.200 3.800s3.200.4 4 2" fill="none" stroke="#b4b4b4" stroke-width=".9"/>
<path d="M9.600 12.600l1.800 1.700 1.600-3.100c1.900.2 3 1.900 2.500 3.600l4.300 4.500-1.600 1.500-4.300-4.500c-2 .5-4.300-1-4.300-3.700z" fill="#fcfcfc" stroke="#8c8c8c" stroke-width="1" stroke-linejoin="round"/>
</symbol>

<!-- journal: doc + pencil -->
<symbol id="i-log" viewBox="0 0 24 24">
<rect x="1.500" y="1.500" width="19.400" height="21.800" rx="2" fill="#f3f3f2" stroke="#8a8a8a" stroke-width="1"/>
<path d="M5 6.300h9M5 9.300h7M5 12.300h5M5 15.300h4M5 18.300h3" stroke="#b4b4b4" stroke-width=".9"/>
<path d="M7.600 18.900l1.600-4.300L18.600 4.800l2.800 2.700-9.600 9.800z" fill="#f1b14a" stroke="#c6802a" stroke-width=".8" stroke-linejoin="round"/>
<path d="M9.800 15.200l8.800-9.200" stroke="#f8d48c" stroke-width=".9"/>
<path d="M18.600 4.800l1.200-1.200c.8-.8 2-.8 2.800 0s.8 2 0 2.800l-1.200 1.100z" fill="#e23a3a" stroke="#b81f1f" stroke-width=".7"/>
<path d="M7.600 18.900l.8-2.200 1.400 1.500z" fill="#2e2e2e"/>
</symbol>

<!-- quarantine: grey redo arrow -->
<symbol id="i-quar" viewBox="0 0 24 24">
<ellipse cx="12" cy="22.600" rx="7" ry="1" fill="#000" opacity=".08"/>
<path d="M22.800 1.400V10.250H13.600L16.400 7.500A6 6 0 1 0 18.100 14.050L22.460 15.600A10.600 10.600 0 1 1 20 4.500z" fill="#ececec" stroke="#adadad" stroke-width="1" stroke-linejoin="round"/>
<path d="M19 5.600A9.400 9.400 0 0 0 3.200 12" fill="none" stroke="#fbfbfb" stroke-width="1.100"/>
</symbol>

<!-- update: chevron + bar -->
<symbol id="i-upd" viewBox="0 0 24 24">
<circle cx="12" cy="3.600" r="2" fill="#f4f4f4" stroke="#aaa" stroke-width=".9"/>
<path d="M3.200 5.600c.8-.9 1.800-.9 2.600-.1L12 11.800l6.200-6.300c.8-.8 1.800-.8 2.600.1s.7 1.800 0 2.500L12 16.600 3.200 8.100c-.700-.700-.800-1.600 0-2.500z" fill="#eeeeee" stroke="#a6a6a6" stroke-width="1" stroke-linejoin="round"/>
<rect x="2.600" y="18" width="18.800" height="3.600" rx="1.600" fill="#f0f0f0" stroke="#a6a6a6" stroke-width="1"/>
</symbol>

<!-- pipette -->
<symbol id="i-pip" viewBox="0 0 24 24">
<ellipse cx="9" cy="20.800" rx="5" ry="1" fill="#000" opacity=".12"/>
<path d="M13.200 7.400L4.800 17c-1.200 1.400-1.300 2.600-.9 3.300.6.600 1.900.3 3.200-1l8.800-9.300z" fill="#e4ecf4" stroke="#4a4a4a" stroke-width="1" stroke-linejoin="round"/>
<path d="M11.600 11.200L5.600 17.700c-.8 1-.9 1.700-.7 2 .5.300 1.100 0 1.900-.8l7.400-7.700z" fill="#6f9fd6"/>
<path d="M11.900 5.800l6 6.300 1.100-1-.9-1c2.200-1.200 3.300-3.700 2-5.900-1.400-2.200-4.200-2.100-5.800-.2L13.100 3z" fill="#3c3c3c" stroke="#242424" stroke-width=".8" stroke-linejoin="round"/>
<path d="M16 4.500c1.200-1.200 2.800-.9 3.400.2" fill="none" stroke="#8a8a8a" stroke-width=".9"/>
</symbol>

<!-- blank file -->
<symbol id="i-file" viewBox="0 0 22 24">
<path d="M3.500 1.600h8.200c4.800 0 8 2.800 8 7V21.400c0 .7-.4 1.100-1.100 1.100H3.500c-.7 0-1.100-.4-1.100-1.100V2.700c0-.7.400-1.100 1.100-1.100z" fill="url(#g-doc)" stroke="#8c8c8c" stroke-width="1"/>
<path d="M11.800 2c2.200.8 1.800 3.300 2.900 4.400s4 .6 4.900 2.400" fill="none" stroke="#adadad" stroke-width=".9"/>
</symbol>

<!-- folder small -->
<symbol id="i-fold" viewBox="0 0 24 24">
<path d="M2.600 3.500h6.200c.8 0 1.300.4 1.600 1l.7 1.300h9.200c.9 0 1.300.4 1.300 1.300V12H1.400V4.800c0-.9.400-1.300 1.200-1.300z" fill="#a98f6b" stroke="#846a3f" stroke-width="1"/>
<path d="M1.800 8.800h6.600l1.800-1.700h10.600c.9 0 1.400.5 1.400 1.400v11.400c0 .9-.5 1.400-1.400 1.400H1.800c-.9 0-1.400-.5-1.400-1.400V10.200c0-.9.500-1.400 1.400-1.400z" fill="url(#g-fold2)" stroke="#8c7246" stroke-width="1"/>
<path d="M1.600 10h7.200l1.800-1.700h10" stroke="#e0d0b4" stroke-width=".8" fill="none"/>
</symbol>

<!-- analysis magnifier -->
<symbol id="i-ana" viewBox="0 0 24 24">
<ellipse cx="11" cy="21" rx="8" ry="1.400" fill="#000" opacity=".15"/>
<path d="M15.200 15.800L21.200 21" stroke="#2b2b2b" stroke-width="3.400" stroke-linecap="round"/>
<path d="M15.800 15.600L21 20.100" stroke="#6a6a6a" stroke-width=".8" stroke-linecap="round"/>
<circle cx="10" cy="9.800" r="7.800" fill="#fdfdff" stroke="#3f5db3" stroke-width="2.500"/>
<circle cx="10" cy="9.800" r="8.900" fill="none" stroke="#2a4390" stroke-width=".5"/>
<circle cx="10" cy="9.800" r="6.400" fill="none" stroke="#aab8e8" stroke-width=".6"/>
</symbol>

<!-- 4-point star -->
<symbol id="i-star" viewBox="0 0 24 24">
<ellipse cx="12" cy="21.500" rx="5" ry="1" fill="#000" opacity=".12"/>
<path d="M12 1.200c.9 4.600 3 7.200 9.400 9.600-6.400 2.200-8.500 4.800-9.400 10-.9-5.200-3-7.800-9.400-10C9 8.400 11.100 5.800 12 1.200z" fill="url(#g-star)" stroke="#c9b326" stroke-width="1" stroke-linejoin="round"/>
<path d="M12 4.500c.9 3.300 2.600 5 6.200 6.300" fill="none" stroke="#fdf8cc" stroke-width=".9"/>
</symbol>

<!-- exit door -->
<symbol id="i-exit" viewBox="0 0 24 24">
<rect x=".6" y=".6" width="15.200" height="21" rx="1.300" fill="url(#g-door)" stroke="#474747" stroke-width="1.100"/>
<path d="M1.600 20.600L10 16.600V1.600" fill="none" stroke="#6a6a6a" stroke-width=".8"/>
<path d="M6.600 7l3 4M9.600 7l-3 4" stroke="#c9c9c9" stroke-width="1"/>
<path d="M11.600 10.600l5.800-5.400 1.800 1.700-2.300 2.300h5.200v2.800h-5.200l2.300 2.300-1.800 1.700z" fill="#ee2a1a" stroke="#b30f0a" stroke-width=".9" stroke-linejoin="round"/>
</symbol>

<!-- av app icon (blob + red target) -->
<symbol id="i-av" viewBox="0 0 16 16">
<path d="M.8 10.600C.8 6.400 3.800 3.600 7.600 4c3.600.4 5.200 3.800 3.600 7.200-1.200 2.400-3.400 4.200-5.400 4.200S.8 14 .8 10.600z" fill="#b9b9ac" stroke="#8e8e84" stroke-width=".6"/>
<circle cx="9.800" cy="6" r="4" fill="#fdeeee" fill-opacity=".6" stroke="#e83434" stroke-opacity=".9" stroke-width="1.600"/>
<path d="M9.800 .2v3.400M9.800 8.400v3.400M4 6h3.400M12.200 6h3.400" stroke="#e83434" stroke-opacity=".9" stroke-width="1.400"/>
</symbol>
<symbol id="i-avg" viewBox="0 0 24 24">
<path d="M1.200 15.500C1.200 9 6 5 11.500 5.600c5.400.6 7.400 6 5 11-1.800 3.600-5 6.200-8 6.200S1.200 21 1.200 15.500z" fill="#dcdcd9" stroke="#cfcfcb" stroke-width=".8"/>
<circle cx="14.400" cy="9.200" r="5.400" fill="#e6e6e4" fill-opacity=".5" stroke="#c6c6c3" stroke-width="1.300"/>
<path d="M14.400 1.400v5M14.400 12v5M6.600 9.200h5M17.200 9.200h5" stroke="#c6c6c3" stroke-width="1.100"/>
</symbol>

<!-- help -->
<symbol id="i-help" viewBox="0 0 20 22">
<rect x=".5" y=".5" width="17.500" height="20" rx="1" fill="#fafafa" stroke="#9d9d9d" stroke-width="1"/>
<path d="M3 3h12M3 5h12" stroke="#cfcfcf" stroke-width=".8"/>
<circle cx="9.300" cy="12.300" r="4.600" fill="none" stroke="#d42626" stroke-width="2.800"/>
<circle cx="9.300" cy="12.300" r="6" fill="none" stroke="#a11a1a" stroke-width=".5"/>
<path d="M9.300 6.300v3M9.300 15.300v3M3.300 12.300h3M12.300 12.300h3" stroke="#fff" stroke-width="1.700"/>
</symbol>

<!-- desktop folder -->
<symbol id="i-dfold" viewBox="0 0 46 40">
<path d="M3.500 1h13c1.800 0 2.800.8 3.400 2.200L21 5.500h21c1.700 0 2.500.8 2.500 2.500V20H1V3.500C1 1.800 1.800 1 3.500 1z" fill="#a68d6a" stroke="#8b734d" stroke-width="1"/>
<path d="M3.200 11.500h12.500l3.600-3.300h22.500c1.700 0 2.700 1 2.700 2.700v24.400c0 1.700-1 2.700-2.700 2.700H3.200c-1.700 0-2.700-1-2.700-2.700V14.200c0-1.700 1-2.700 2.700-2.700z" fill="url(#g-fold)" stroke="#94794f" stroke-width="1"/>
<path d="M2 13.200h14.400l3.600-3.300h22.600" stroke="#ddcdb0" stroke-width="1" fill="none"/>
</symbol>

<!-- flash card -->
<symbol id="i-flash" viewBox="0 0 36 44">
<path d="M3 .8h26.500l5.700 5.600V41c0 1.500-.8 2.300-2.300 2.300H3c-1.500 0-2.300-.8-2.300-2.300V3.100C.7 1.600 1.500.8 3 .8z" fill="#565656" stroke="#3a3a3a" stroke-width="1.200"/>
<rect x="3.200" y="3.200" width="29.200" height="18" rx="2.200" fill="#e6d02e" stroke="#b9a418" stroke-width="1"/>
<path d="M6 6v13M9 6v13M12 6v13M15 6v13M18 6v13M21 6v13M24 6v13M27 6v13M30 6v13" stroke="#c9b41e" stroke-width="1.100"/>
<path d="M4 4.500h27.500" stroke="#f6ec8a" stroke-width="1.200"/>
<path d="M4 11c8-2 12 4 28 1" stroke="#f8f0a0" stroke-width="1" fill="none"/>
<circle cx="27.500" cy="27.500" r="2.300" fill="#3c3c3c" stroke="#2c2c2c"/>
<path d="M4 26h18M4 30h20" stroke="#4c4c4c" stroke-width="1"/>
<rect x="3.400" y="34" width="29.400" height="9" fill="#f6f4ee" stroke="#3c3c3c" stroke-width=".8"/>
<rect x="3.800" y="34.400" width="28.600" height="3" fill="#dfa24a"/>
<path d="M14 34.400v3M20 34.400v3" stroke="#9a6424" stroke-width="1"/>
</symbol>

<!-- shortcut badge -->
<symbol id="i-lnk" viewBox="0 0 10 10">
<rect x="0" y="0" width="10" height="10" fill="#fff"/><rect x=".5" y=".5" width="9" height="9" fill="#fff" stroke="#000" stroke-width="1"/>
<path d="M2 2h4.500L5 3.500 8.200 6.700 6.700 8.200 3.500 5 2 6.500z" fill="#000"/>
</symbol>
<linearGradient id="g-lx" x1="0" y1="0" x2="1" y2="1"><stop offset="0" stop-color="#d8d8d8"/><stop offset=".5" stop-color="#6e6e6e"/><stop offset="1" stop-color="#2e2e2e"/></linearGradient>
<linearGradient id="g-mon" x1="0" y1="0" x2="1" y2="1"><stop offset="0" stop-color="#6aa0dc"/><stop offset="1" stop-color="#2f63a8"/></linearGradient>
<linearGradient id="g-red" x1="0" y1="0" x2="0" y2="1"><stop offset="0" stop-color="#f03030"/><stop offset=".5" stop-color="#c81414"/><stop offset=".52" stop-color="#a60c0c"/><stop offset="1" stop-color="#7c0404"/></linearGradient>
<linearGradient id="g-ff" x1=".85" y1=".1" x2=".2" y2=".95"><stop offset="0" stop-color="#fff36a"/><stop offset=".3" stop-color="#ffbd2e"/><stop offset=".6" stop-color="#ff7a1a"/><stop offset=".85" stop-color="#ff3b3b"/><stop offset="1" stop-color="#e8207a"/></linearGradient>
<linearGradient id="g-ffg" x1=".3" y1="0" x2=".7" y2="1"><stop offset="0" stop-color="#19b8f4"/><stop offset=".55" stop-color="#1a5fe0"/><stop offset="1" stop-color="#5b3fd8"/></linearGradient>
<linearGradient id="g-fff" x1=".5" y1="0" x2=".3" y2="1"><stop offset="0" stop-color="#ff9a1e"/><stop offset=".6" stop-color="#ff5a26"/><stop offset="1" stop-color="#f02848"/></linearGradient>

<!-- LXDE-ish logo -->
<symbol id="i-lxde" viewBox="0 0 34 24">
<path d="M24 1.200C17 5 10 9 3.500 13.500L4.500 15.500C8 13.500 11 12 14 10.800 10.500 15 8 19.500 6.500 24H12C14 18 17.500 12 21.500 8 24.500 12.500 27.500 18 30 24h3.800C31 16 28 8 25.600 1.400z" fill="url(#g-lx)"/>
<path d="M4.500 14.200C10 10.500 16 7 22.600 3.200M8.200 23.500C10.500 17 15 10.500 21 5.800M10.400 23.800C12.500 18 16 12 21.200 7.200" stroke="#f4f4f4" stroke-width="1" fill="none" opacity=".85"/>
<path d="M24.800 2.200c2 6.500 4.400 13.500 7.400 21.400" stroke="#c8c8c8" stroke-width=".9" fill="none" opacity=".8"/>
</symbol>

<!-- chromium -->
<symbol id="i-chr" viewBox="0 0 22 22">
<circle cx="11" cy="11" r="10.800" fill="#5b8fee"/>
<path d="M11 11L1.650 5.600A10.800 10.800 0 0 1 20.350 5.600z" fill="#3c6cdc"/>
<path d="M11 .2A10.800 10.800 0 0 1 20.350 5.600H11z" fill="#3c6cdc"/>
<path d="M20.350 5.600A10.800 10.800 0 0 1 11 21.800L15.700 13.700z" fill="#8db2f6"/>
<path d="M11 11h9.350L15.700 13.700 11 21.800z" fill="#8db2f6"/>
<path d="M1.650 5.600L6.300 13.700 11 21.800A10.800 10.800 0 0 1 1.650 5.600z" fill="#5b8fee"/>
<circle cx="11" cy="11" r="5.200" fill="#e8f0fe"/>
<circle cx="11" cy="11" r="4.200" fill="#4285f4"/>
</symbol>

<!-- file cabinet -->
<symbol id="i-cab" viewBox="0 0 18 21">
<path d="M2 .6h14l1.400 2.200V20.400H.6V2.800z" fill="#ececec" stroke="#9a9a9a" stroke-width=".9"/>
<rect x="2.400" y="4" width="13.200" height="7" fill="#e2e2e2" stroke="#767676" stroke-width=".9"/>
<rect x="2.400" y="12" width="13.200" height="6.600" fill="#e2e2e2" stroke="#767676" stroke-width=".9"/>
<path d="M5.600 6.200v2h6.800v-2" fill="#fafafa" stroke="#8a8a8a" stroke-width=".9"/>
<path d="M5.600 14.200v2h6.800v-2" fill="#fafafa" stroke="#8a8a8a" stroke-width=".9"/>
</symbol>

<!-- red grid (pager) -->
<symbol id="i-grid" viewBox="0 0 22 20">
<rect x=".6" y=".6" width="20.800" height="18.600" rx="2.600" fill="#dcdcdc" stroke="#686868" stroke-width="1.100"/>
<rect x="2.800" y="2.600" width="16.400" height="13.600" fill="url(#g-red)" stroke="#4c0000" stroke-width="1"/>
<path d="M11 2.600v13.600M2.800 9.200h16.400" stroke="#5c0000" stroke-width="1.100"/>
<path d="M4.600 4.600l2.400 2M13 4.600l2.400 2M4.600 11.400l2 1.800M13 11.400l2 1.800" stroke="#ff9a9a" stroke-width=".9"/>
</symbol>

<!-- white doc -->
<symbol id="i-wdoc" viewBox="0 0 20 24">
<path d="M.7.400h12.800l5.800 6V24H.7z" fill="#fff" stroke="#5e5e5e" stroke-width="1.100"/>
<path d="M13.500.400v6h5.800z" fill="#8c8c8c" stroke="#5e5e5e" stroke-width=".8"/>
</symbol>

<!-- black circle app -->
<symbol id="i-moon" viewBox="0 0 29 24">
<rect x="0" y="0" width="29" height="24" fill="#fff"/>
<circle cx="17" cy="11.500" r="12" fill="#000"/>
<path d="M26 .2C20.500 6 17.800 13 17.600 23.600c4.600 0 8.400-2.600 10.400-6.400V.2z" fill="#fff"/>
<path d="M24.400 0l4.600 0V9z" fill="#000"/>
</symbol>

<!-- monitor -->
<symbol id="i-mon" viewBox="0 0 22 21">
<rect x=".6" y=".6" width="20.800" height="14.400" rx="1" fill="#d6d6d6" stroke="#6f7a84" stroke-width="1"/>
<rect x="2.400" y="2.400" width="17.200" height="10.800" fill="url(#g-mon)" stroke="#2a558f" stroke-width=".6"/>
<path d="M9.500 3l3.500.2-2.600 6.800z" fill="#9cc0ea" opacity=".55"/>
<path d="M8.600 15h4.800l.8 2.800H7.800z" fill="#cfcfcf" stroke="#9a9a9a" stroke-width=".6"/>
<rect x="6" y="17.800" width="10" height="2.200" rx=".6" fill="#f2f2f2" stroke="#8a8a8a" stroke-width=".7"/>
</symbol>

<!-- firefox -->
<symbol id="i-ff" viewBox="0 0 18 18">
<circle cx="9.200" cy="9.600" r="8.300" fill="url(#g-ff)"/>
<circle cx="9.800" cy="8.300" r="4.900" fill="url(#g-ffg)"/>
<path d="M.9 7.800C1 5.600 1.800 3.600 3.200 1.800 3.500 3.200 4.300 4.100 5.500 4.700 6.900 4.100 8.400 4.200 9.500 5 7.700 5.200 6.800 6.400 7.400 7.600 8 8.600 9.400 8.600 10 9.600 10.400 10.600 9.400 11.600 8 11.400 9 12.600 11.200 12.900 12.800 12 11.800 14.200 9.400 15 7.200 14.400 3.600 13.400 1 11.200.9 7.800z" fill="url(#g-fff)"/>
<path d="M3.200 1.800c.2 1 .6 1.800 1.200 2.400-.8.600-1.400 1.400-1.600 2.400C2.200 5.200 2.400 3.400 3.200 1.800z" fill="#ffb02e"/>
<path d="M12.400 1.900c2.600 1.200 4.600 3.600 5 6.600.2 2-.4 3.800-1.400 5.200 1-3.400.2-6.600-1.800-8.800-.6-1.200-1-2-1.800-3z" fill="#fff36a" opacity=".85"/>
</symbol>

<!-- volume -->
<symbol id="i-vol" viewBox="0 0 23 19">
<path d="M1 6.400h3.200L8.600 1.200c.6-.6 1.300-.3 1.300.5v15.600c0 .8-.7 1.100-1.300.5L4.200 12.600H1c-.5 0-.7-.3-.7-.7V7.100c0-.4.200-.7.700-.7z" fill="#c3c3c1" stroke="#4e4e4c" stroke-width="1" stroke-linejoin="round"/>
<path d="M8 2.500v14" stroke="#efefef" stroke-width="1.200"/>
<path d="M12.600 6.600c1.600 1.600 1.600 4.200 0 5.800" fill="none" stroke="#5d86bc" stroke-width="1.500"/>
<path d="M15 3.800c3 3 3 8.400 0 11.400" fill="none" stroke="#5d86bc" stroke-width="1.500"/>
<path d="M17.400 1.200c4.400 4.400 4.400 12.200 0 16.600" fill="none" stroke="#41527a" stroke-width="1.500"/>
</symbol>

<!-- plug/search -->
<symbol id="i-plug" viewBox="0 0 20 18">
<rect x="3.600" y=".6" width="15.200" height="12.600" fill="#fbfbfb" stroke="#7c7c7c" stroke-width="1.100"/>
<circle cx="12.200" cy="6" r="2.800" fill="#e8e8e8" stroke="#8a8a8a" stroke-width="1"/>
<path d="M.8 17.400L11.600 6.800" stroke="#2f5f9f" stroke-width="2.600"/>
<path d="M1.200 17L11.600 6.800" stroke="#7fb0ea" stroke-width=".9"/>
</symbol>
</defs></svg>
</body></html>
